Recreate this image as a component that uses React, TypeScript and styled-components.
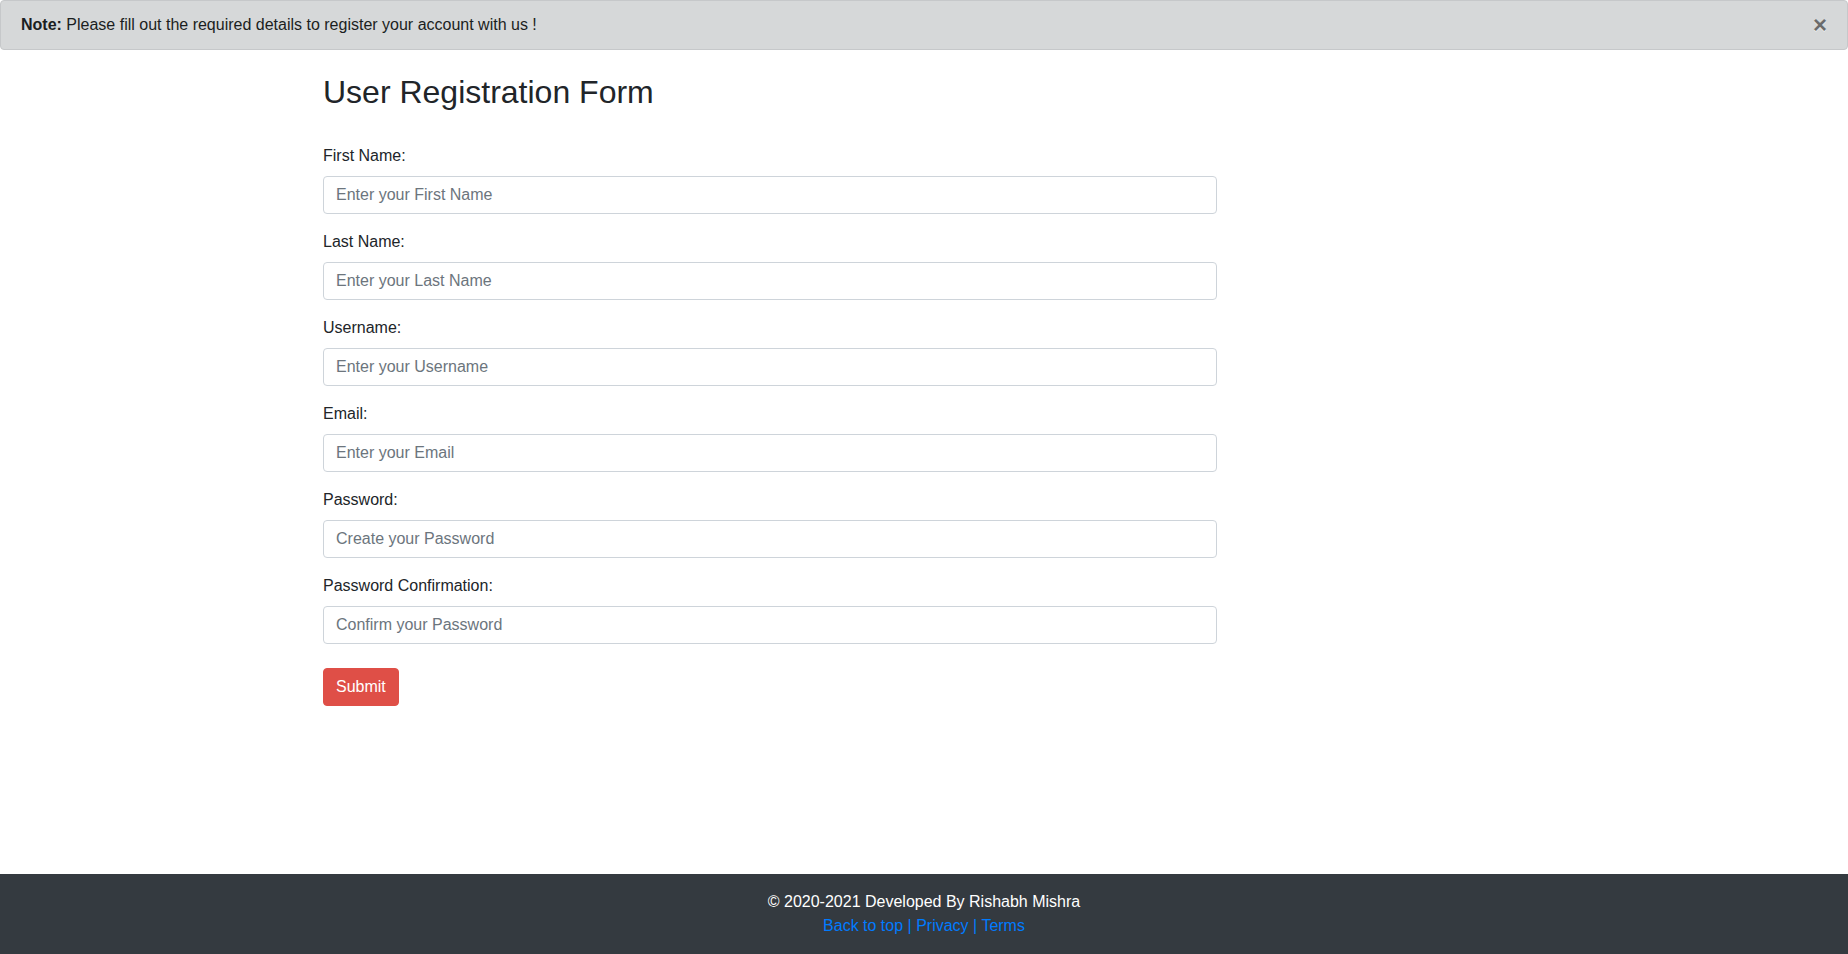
import React from "react";
import styled, { createGlobalStyle } from "styled-components";

const GlobalStyle = createGlobalStyle`
  *, *::before, *::after { box-sizing: border-box; }
  html, body { margin: 0; padding: 0; }
  body {
    font-family: "Liberation Sans", Arial, sans-serif;
    font-size: 16px;
    line-height: 1.5;
    color: #212529;
    background: #fff;
  }
`;

const Page = styled.div`
  min-height: 100vh;
  display: flex;
  flex-direction: column;
`;

const Alert = styled.div`
  position: relative;
  padding: 12px 64px 12px 20px;
  background: #d6d8d9;
  border: 1px solid #c6c8ca;
  border-radius: 4px;
  color: #1b1e21;
  line-height: 24px;
`;

const CloseButton = styled.button`
  position: absolute;
  top: 0;
  right: 0;
  padding: 12px 20px;
  background: transparent;
  border: 0;
  font-family: "Liberation Sans", Arial, sans-serif;
  font-size: 24px;
  font-weight: 700;
  line-height: 24px;
  color: #000;
  opacity: 0.5;
  text-shadow: 0 1px 0 #fff;
  cursor: pointer;
`;

const Main = styled.main`
  flex: 1;
  display: grid;
  grid-template-columns: repeat(12, 1fr);
  padding-top: 23px;
`;

const Column = styled.div`
  grid-column: 3 / span 6;
  padding: 0 15px;
`;

const Title = styled.h2`
  margin: 0 0 33px;
  font-size: 32px;
  font-weight: 500;
  line-height: 1.2;
`;

const Form = styled.form`
  display: flex;
  flex-direction: column;
`;

const Group = styled.div`
  margin-bottom: 16px;
  display: flex;
  flex-direction: column;
`;

const Label = styled.label`
  display: block;
  margin-bottom: 8px;
  line-height: 24px;
`;

const Input = styled.input`
  display: block;
  width: 100%;
  height: 38px;
  padding: 6px 12px;
  font-family: "Liberation Sans", Arial, sans-serif;
  font-size: 16px;
  line-height: 24px;
  color: #495057;
  background: #fff;
  border: 1px solid #ced4da;
  border-radius: 4px;
  outline: none;
  &::placeholder { color: #6c757d; opacity: 1; }
`;

const SubmitButton = styled.button`
  align-self: flex-start;
  margin-top: 8px;
  padding: 6px 12px;
  font-family: "Liberation Sans", Arial, sans-serif;
  font-size: 16px;
  line-height: 24px;
  color: #fff;
  background: #df4f47;
  border: 1px solid #df4f47;
  border-radius: 4px;
  cursor: pointer;
`;

const Footer = styled.footer`
  background: #343a40;
  padding: 16px 0;
  text-align: center;
  color: #fff;
  line-height: 24px;
`;

const FooterLinks = styled.div`
  color: #007bff;
`;

const FooterLink = styled.a`
  color: #007bff;
  text-decoration: none;
`;

const fields = [
  { id: "first", label: "First Name:", placeholder: "Enter your First Name", type: "text" },
  { id: "last", label: "Last Name:", placeholder: "Enter your Last Name", type: "text" },
  { id: "username", label: "Username:", placeholder: "Enter your Username", type: "text" },
  { id: "email", label: "Email:", placeholder: "Enter your Email", type: "email" },
  { id: "password", label: "Password:", placeholder: "Create your Password", type: "password" },
  { id: "confirm", label: "Password Confirmation:", placeholder: "Confirm your Password", type: "password" },
];

export default function App() {
  return (
    <Page>
      <GlobalStyle />
      <Alert role="alert">
        <strong>Note:</strong> Please fill out the required details to register your account with us !
        <CloseButton type="button" aria-label="Close">×</CloseButton>
      </Alert>
      <Main>
        <Column>
          <Title>User Registration Form</Title>
          <Form onSubmit={(e) => e.preventDefault()}>
            {fields.map((f) => (
              <Group key={f.id}>
                <Label htmlFor={f.id}>{f.label}</Label>
                <Input id={f.id} type={f.type} placeholder={f.placeholder} />
              </Group>
            ))}
            <SubmitButton type="submit">Submit</SubmitButton>
          </Form>
        </Column>
      </Main>
      <Footer>
        <div>© 2020-2021 Developed By Rishabh Mishra</div>
        <FooterLinks>
          <FooterLink href="#">Back to top</FooterLink> | <FooterLink href="#">Privacy</FooterLink> |{" "}
          <FooterLink href="#">Terms</FooterLink>
        </FooterLinks>
      </Footer>
    </Page>
  );
}
